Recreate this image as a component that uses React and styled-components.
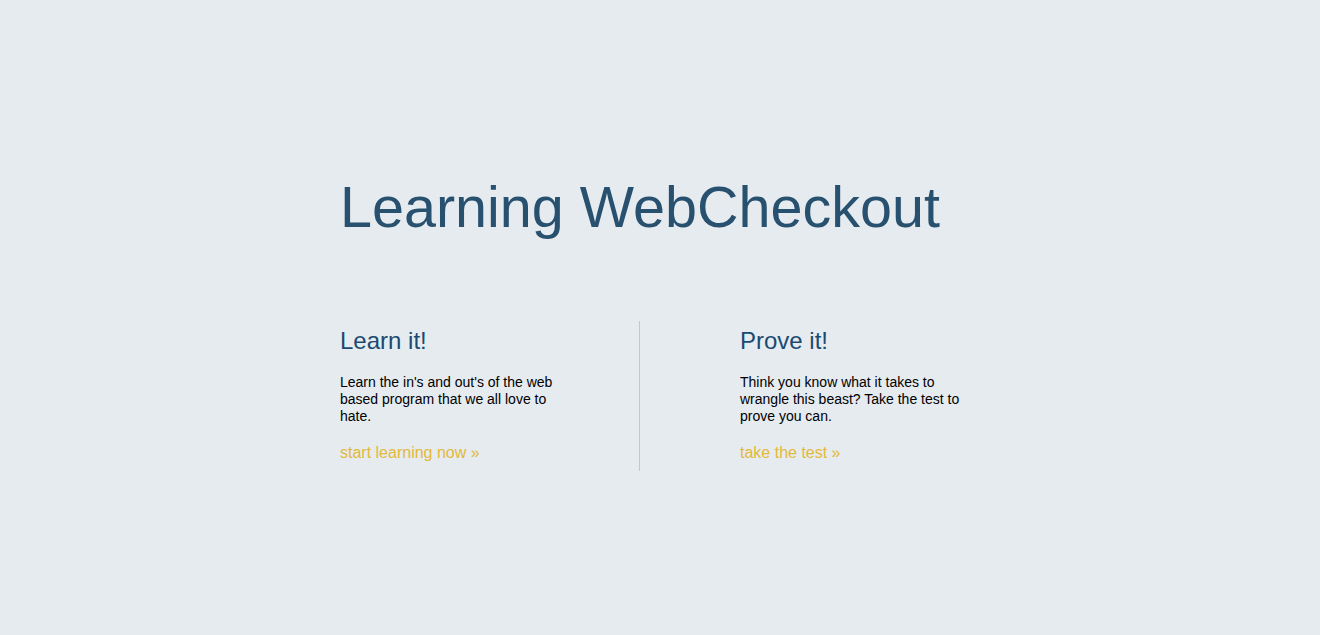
import styled, { createGlobalStyle } from "styled-components";

const GlobalStyle = createGlobalStyle`
  html, body {
    margin: 0;
    padding: 0;
    background: #e6ebf0;
    font-family: "Liberation Sans", Arial, Helvetica, sans-serif;
  }
`;

const Page = styled.div`
  min-height: 100vh;
  background: #e6ebf0;
`;

const Container = styled.div`
  width: 640px;
  margin: 0 auto;
  padding-top: 175px;
`;

const Title = styled.h1`
  margin: 0;
  font-size: 57.5px;
  line-height: 64px;
  font-weight: normal;
  color: #28506f;
`;

const Row = styled.div`
  display: flex;
  margin-top: 82px;
`;

const Column = styled.div`
  box-sizing: border-box;
  width: ${(props) => (props.side === "left" ? "300px" : "340px")};
  padding: 5px 0 8px ${(props) => (props.side === "left" ? "0" : "100px")};
  border-right: ${(props) =>
    props.side === "left" ? "1px solid #c3c8cc" : "none"};
`;

const Heading = styled.h2`
  margin: 0 0 19px;
  font-size: 24px;
  line-height: 29px;
  font-weight: normal;
  color: #1b4a70;
`;

const Text = styled.p`
  margin: 0 0 18px;
  width: 228px;
  font-size: 14px;
  line-height: 17px;
  color: #000;
`;

const MoreLink = styled.a`
  display: block;
  font-size: 16px;
  line-height: 20px;
  color: #e2b93b;
  text-decoration: none;
  cursor: pointer;
`;

function App() {
  return (
    <Page>
      <GlobalStyle />
      <Container>
        <Title>Learning WebCheckout</Title>
        <Row>
          <Column side="left">
            <Heading>Learn it!</Heading>
            <Text>
              Learn the in's and out's of the web based program that we all
              love to hate.
            </Text>
            <MoreLink href="#">start learning now »</MoreLink>
          </Column>
          <Column side="right">
            <Heading>Prove it!</Heading>
            <Text>
              Think you know what it takes to wrangle this beast? Take the test
              to prove you can.
            </Text>
            <MoreLink href="#">take the test »</MoreLink>
          </Column>
        </Row>
      </Container>
    </Page>
  );
}

export default App;
